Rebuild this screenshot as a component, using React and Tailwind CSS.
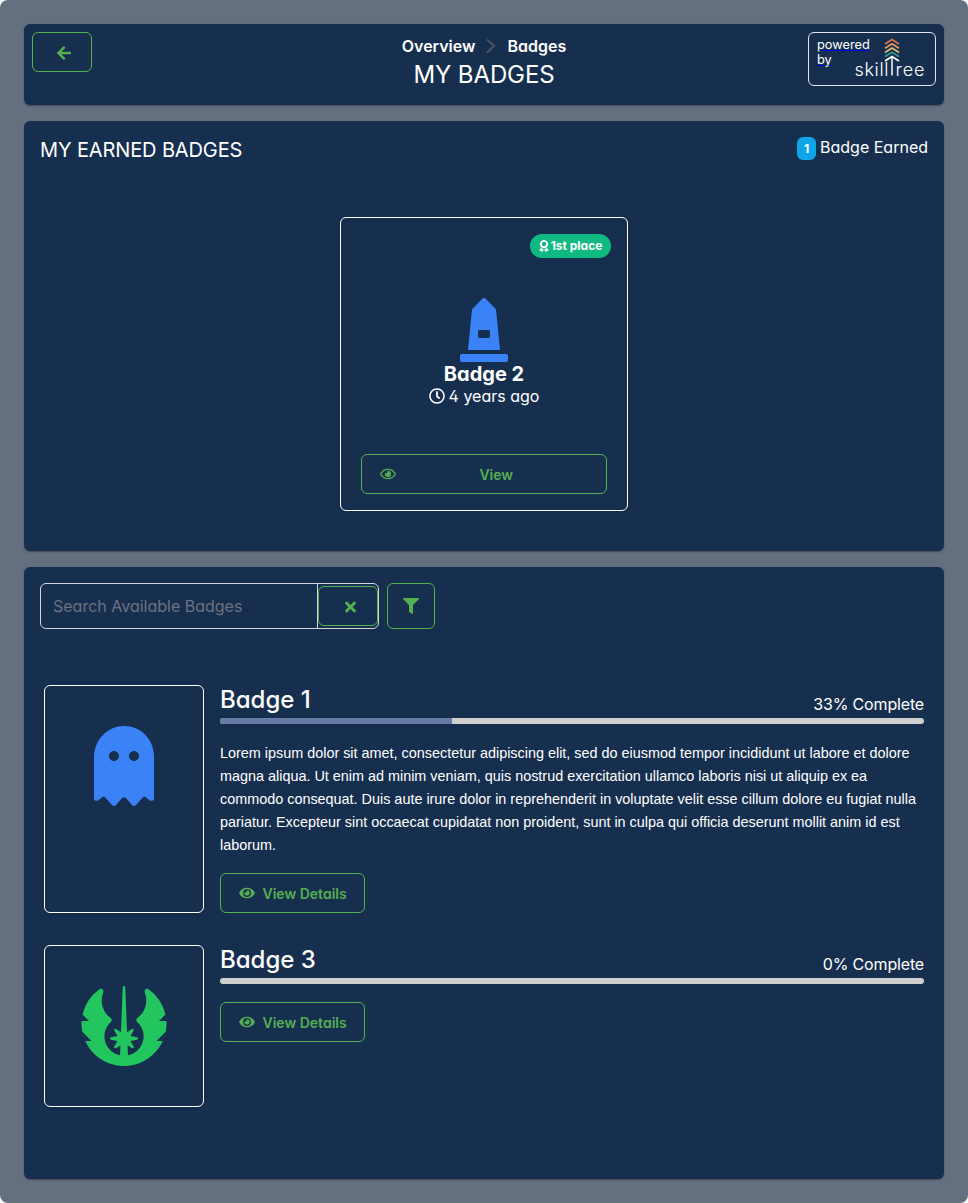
import React from "react";
import { FaArrowLeft, FaTimes, FaFilter, FaEye, FaRegEye, FaGhost, FaJedi, FaMonument, FaAward, FaRegClock } from "react-icons/fa";

function SkillTreeLogo() {
  return (
    <svg className="h-10 w-[70px] shrink-0 overflow-visible" viewBox="0 0 70 40" fill="none">
      <g strokeWidth="1.8">
        <path d="M30 6.9 37 2.5l7 4.4" stroke="#dd6e52" />
        <path d="M30 11.2 37 6.8l7 4.4" stroke="#eb9a5d" />
        <path d="M30 15.4 37 11l7 4.4" stroke="#e6bd68" />
        <path d="M30 19.6 37 15.2l7 4.4" stroke="#2a9d8f" />
        <path d="M30 24 37 19.6l7 4.4" stroke="#fff" />
      </g>
      <path d="M37 20V38.5" stroke="#fff" strokeWidth="1.5" />
      <text x="-0.5" y="38.5" textLength="34" fill="#fff" className="font-['Inter'] text-[18px] font-light">skill</text>
      <text x="40.5" y="38.5" textLength="29" fill="#fff" className="font-['Inter'] text-[18px] font-light">ree</text>
    </svg>
  );
}

const button = "flex items-center rounded-md border border-[#54b04f] text-[#54b04f]";
const panel = "rounded-md bg-[#172f4f] shadow-[0_1px_2px_rgba(0,0,0,0.35)]";

function Badge({ title, percent, icon, tall, children }) {
  return (
    <div className="flex gap-4">
      <div className={`flex w-40 justify-center rounded-md border border-white pt-10 shadow-sm ${tall ? "h-[228px]" : "h-[162px]"}`}>{icon}</div>
      <div className="flex-1">
        <div className="flex h-[33px] items-start justify-between">
          <h3 className="text-2xl leading-[30px] font-medium">{title}</h3>
          <span className="pt-[7px] leading-6 tracking-[-0.16px]">{percent}% Complete</span>
        </div>
        <div className="h-1.5 overflow-hidden rounded bg-[#cfcfcf]">
          <div className="h-full bg-[#657ba5]" style={{ width: `${percent}%` }} />
        </div>
        {children}
        <button className={`${button} mt-[18px] h-10 w-[145px] gap-2 pl-[17.5px] text-sm font-semibold`}>
          <FaEye className="h-3.5 w-4" />
          <span className="pt-0.5">View Details</span>
        </button>
      </div>
    </div>
  );
}

export default function App() {
  return (
    <div className="bg-white font-['Inter',sans-serif] text-base text-white [font-feature-settings:'cv02','cv03','cv04','cv11']">
      <main className="flex h-[1203px] flex-col gap-4 rounded-lg bg-[#646f7f] p-6">
        <header className={`${panel} flex h-[81px] shrink-0 items-start justify-between p-2`}>
          <div className="w-32">
            <button className={`${button} h-10 w-[60px] justify-center pt-0.5 pl-1`}>
              <FaArrowLeft className="h-4 w-3.5" />
            </button>
          </div>
          <div className="pt-0.5 text-center">
            <nav className="flex items-center justify-center gap-[11px] leading-6 font-semibold">
              <span>Overview</span>
              <svg className="h-4 w-2.5" viewBox="0 0 10 16" fill="none" stroke="#4b5563" strokeWidth="1.9"><path d="m1 1.5 7 6.5-7 6.5" /></svg>
              <span>Badges</span>
            </nav>
            <h1 className="pt-px text-2xl leading-8 tracking-[-0.1px]">MY BADGES</h1>
          </div>
          <a className="flex h-[54px] w-32 rounded-md border border-slate-200 pl-2 text-[12.8px]">
            <span className="flex w-[38px] flex-col items-start pt-1 leading-[15px] underline decoration-[#0000ee]">
              <span>powered</span>
              <span>by</span>
            </span>
            <span className="pt-1"><SkillTreeLogo /></span>
          </a>
        </header>

        <section className={`${panel} h-[430px] shrink-0 px-4 pt-4`}>
          <div className="flex h-6 items-start justify-between">
            <h2 className="pt-px text-xl leading-6 tracking-[-0.12px]">MY EARNED BADGES</h2>
            <div className="flex items-start gap-1 leading-5">
              <span className="flex h-[23px] w-[19px] items-center justify-center rounded-md bg-[#0ea5e9] text-xs font-bold">1</span>
              <span>Badge Earned</span>
            </div>
          </div>
          <article className="mx-auto mt-14 flex h-[294px] w-72 flex-col items-center rounded-md border border-white px-5 pt-4 shadow-sm">
            <div className="-mr-1 flex h-6 w-[81px] items-center justify-center gap-0.5 self-end rounded-xl bg-[#10b981] text-xs font-bold">
              <FaAward className="h-3 w-2.5" /><span>1st place</span>
            </div>
            <FaMonument className="mt-10 h-16 w-12 text-[#3b82f6]" />
            <h3 className="text-xl leading-6 font-bold">Badge 2</h3>
            <div className="flex items-center gap-1 leading-5"><FaRegClock /><span>4 years ago</span></div>
            <button className={`${button} mt-12 h-10 w-[246px] pr-[9px] pl-[17.5px] text-sm font-semibold`}>
              <FaRegEye className="h-3.5 w-4" />
              <span className="flex-1 pt-0.5 text-center">View</span>
            </button>
          </article>
        </section>

        <section className={`${panel} h-[612px] shrink-0 px-4 pt-4`}>
          <div className="flex gap-2">
            <div className="flex h-[46px] w-[339px] items-center rounded-md border border-gray-300">
              <input className="h-full w-[277px] border-r border-gray-300 px-3 outline-none placeholder:text-[#6b7280]" placeholder="Search Available Badges" />
              <button className={`${button} h-10 w-[60px] justify-center pt-0.5 pl-1`}><FaTimes className="h-4 w-[11px]" /></button>
            </div>
            <button className={`${button} h-[46px] w-12 justify-center`}><FaFilter /></button>
          </div>
          <div className="mt-14 flex flex-col gap-8 px-1">
            <Badge title="Badge 1" percent={33} tall icon={<FaGhost className="h-20 w-[60px] text-[#3b82f6]" />}>
              <p className="-mb-0.5 pt-[18px] font-['Liberation_Sans',sans-serif] text-[14.4px] leading-[23px]">
                Lorem ipsum dolor sit amet, consectetur adipiscing elit, sed do eiusmod tempor incididunt ut labore et dolore magna aliqua. Ut enim ad minim veniam, quis nostrud exercitation ullamco laboris nisi ut aliquip ex ea commodo consequat. Duis aute irure dolor in reprehenderit in voluptate velit esse cillum dolore eu fugiat nulla pariatur. Excepteur sint occaecat cupidatat non proident, sunt in culpa qui officia deserunt mollit anim id est laborum.
              </p>
            </Badge>
            <Badge title="Badge 3" percent={0} icon={<FaJedi className="h-20 w-[90px] text-[#22c55e]" />} />
          </div>
        </section>
      </main>
    </div>
  );
}
